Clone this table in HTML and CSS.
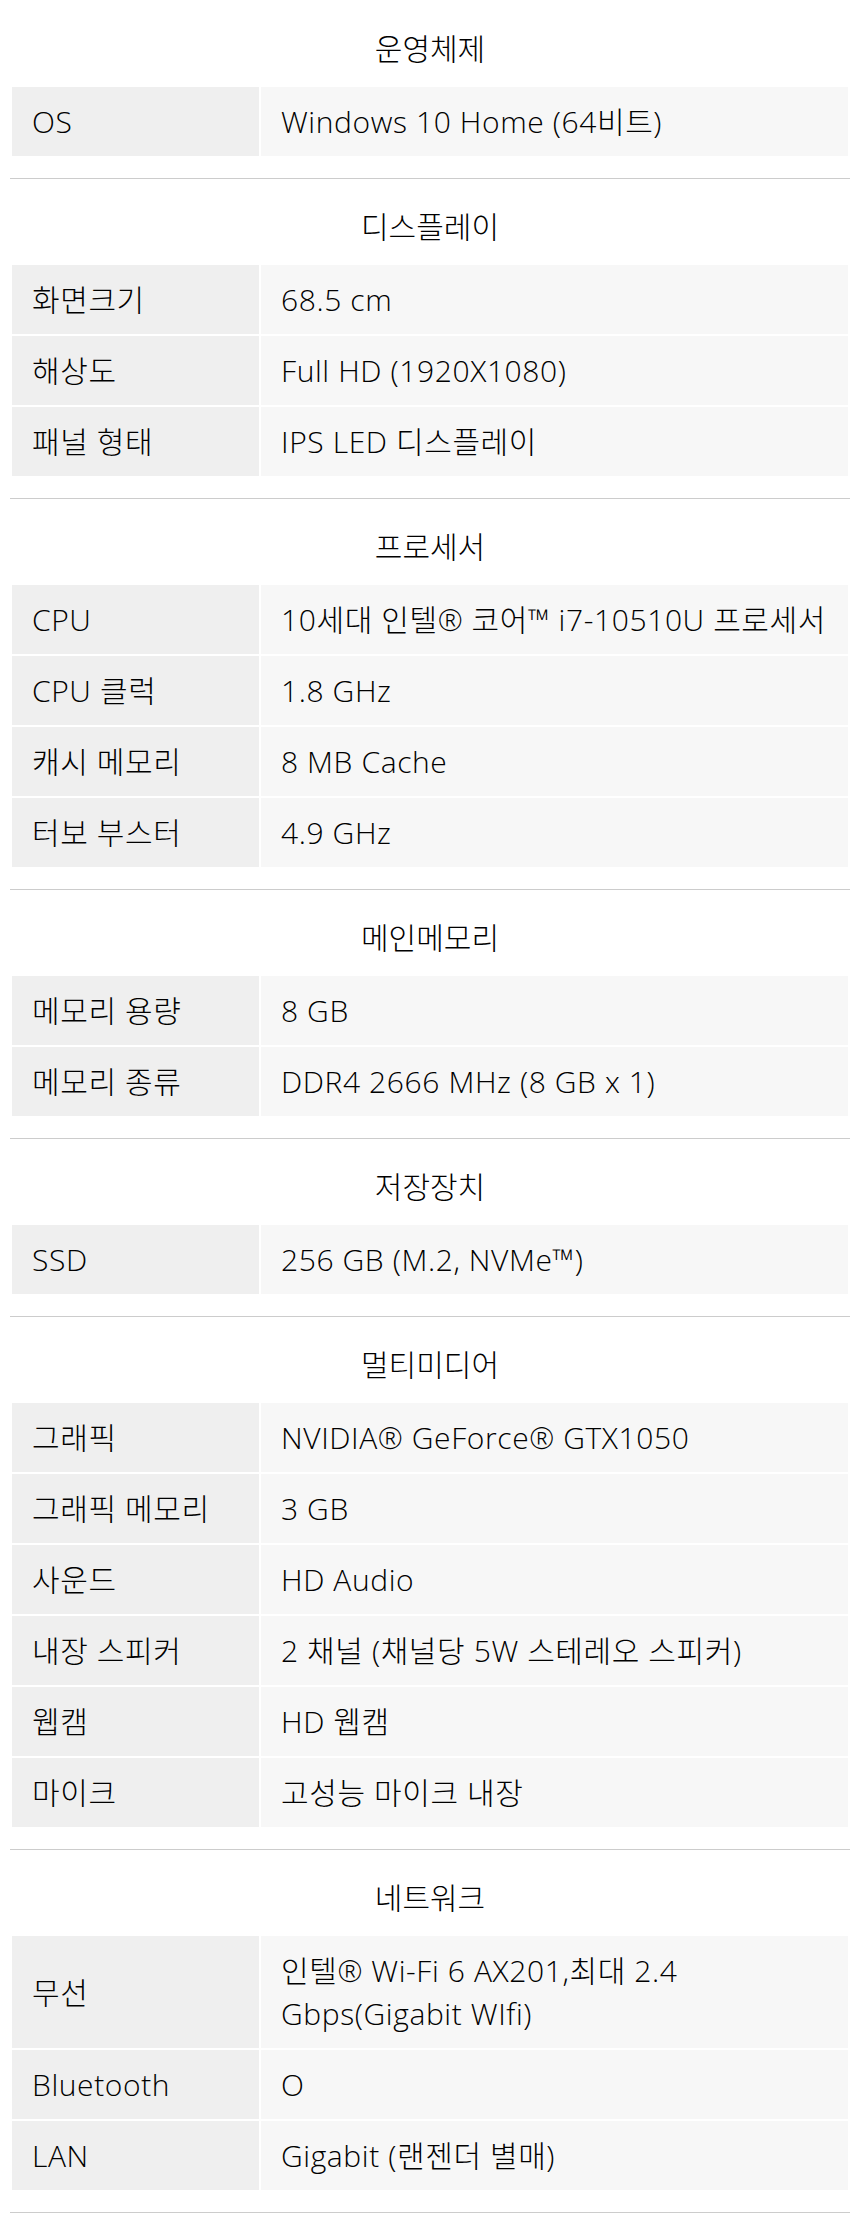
FILE: index.html
```html
<!DOCTYPE html>
<html lang="ko">
<head>
  <meta charset="UTF-8" />
  <title>제품 사양</title>
  <link rel="stylesheet" href="styles.css">
</head>
<body>

  <div class="spec-group">
    <h2 class="spec-title">운영체제</h2>
    <table class="spec-table">
      <colgroup><col class="col-name"><col></colgroup>
      <tr><td class="spec-name">OS</td><td class="spec-value">Windows 10 Home (64비트)</td></tr>
    </table>
  </div>

  <div class="spec-group">
    <h2 class="spec-title">디스플레이</h2>
    <table class="spec-table">
      <colgroup><col class="col-name"><col></colgroup>
      <tr><td class="spec-name">화면크기</td><td class="spec-value">68.5 cm</td></tr>
      <tr><td class="spec-name">해상도</td><td class="spec-value">Full HD (1920X1080)</td></tr>
      <tr><td class="spec-name">패널 형태</td><td class="spec-value">IPS LED 디스플레이</td></tr>
    </table>
  </div>

  <div class="spec-group">
    <h2 class="spec-title">프로세서</h2>
    <table class="spec-table">
      <colgroup><col class="col-name"><col></colgroup>
      <tr><td class="spec-name">CPU</td><td class="spec-value">10세대 인텔® 코어™ i7-10510U 프로세서</td></tr>
      <tr><td class="spec-name">CPU 클럭</td><td class="spec-value">1.8 GHz</td></tr>
      <tr><td class="spec-name">캐시 메모리</td><td class="spec-value">8 MB Cache</td></tr>
      <tr><td class="spec-name">터보 부스터</td><td class="spec-value">4.9 GHz</td></tr>
    </table>
  </div>

  <div class="spec-group">
    <h2 class="spec-title">메인메모리</h2>
    <table class="spec-table">
      <colgroup><col class="col-name"><col></colgroup>
      <tr><td class="spec-name">메모리 용량</td><td class="spec-value">8 GB</td></tr>
      <tr><td class="spec-name">메모리 종류</td><td class="spec-value">DDR4 2666 MHz (8 GB x 1)</td></tr>
    </table>
  </div>

  <div class="spec-group">
    <h2 class="spec-title">저장장치</h2>
    <table class="spec-table">
      <colgroup><col class="col-name"><col></colgroup>
      <tr><td class="spec-name">SSD</td><td class="spec-value">256 GB (M.2, NVMe™)</td></tr>
    </table>
  </div>

  <div class="spec-group">
    <h2 class="spec-title">멀티미디어</h2>
    <table class="spec-table">
      <colgroup><col class="col-name"><col></colgroup>
      <tr><td class="spec-name">그래픽</td><td class="spec-value">NVIDIA® GeForce® GTX1050</td></tr>
      <tr><td class="spec-name">그래픽 메모리</td><td class="spec-value">3 GB</td></tr>
      <tr><td class="spec-name">사운드</td><td class="spec-value">HD Audio</td></tr>
      <tr><td class="spec-name">내장 스피커</td><td class="spec-value">2 채널 (채널당 5W 스테레오 스피커)</td></tr>
      <tr><td class="spec-name">웹캠</td><td class="spec-value">HD 웹캠</td></tr>
      <tr><td class="spec-name">마이크</td><td class="spec-value">고성능 마이크 내장</td></tr>
    </table>
  </div>

  <div class="spec-group">
    <h2 class="spec-title">네트워크</h2>
    <table class="spec-table">
      <colgroup><col class="col-name"><col></colgroup>
      <tr><td class="spec-name">무선</td><td class="spec-value">인텔® Wi-Fi 6 AX201,최대 2.4 Gbps(Gigabit WIfi)</td></tr>
      <tr><td class="spec-name">Bluetooth</td><td class="spec-value">O</td></tr>
      <tr><td class="spec-name">LAN</td><td class="spec-value">Gigabit (랜젠더 별매)</td></tr>
    </table>
  </div>

</body>
</html>
```

FILE: styles.css
```css
body {
  margin: 0;
  padding: 1px 10px 16px 10px;
  font-family: 'Open Sans', 'Noto Sans CJK KR', sans-serif;
  font-size: 30px;
  font-weight: 300;
  color: #000;
  background: white;
}
.spec-group {
  padding-top: 27px;
  padding-bottom: 20px;
  border-bottom: 1px solid #cccccc;
}
.spec-title {
  margin: 0 0 15px 0;
  text-align: center;
  font-size: 30px;
  font-weight: 300;
  line-height: 42px;
  color: #000;
}
.spec-table {
  width: 100%;
  table-layout: fixed;
  border-spacing: 2px;
}
.col-name {
  width: 247px;
}
.spec-table td {
  padding: 13px 8px 13px 20px;
  line-height: 43px;
  letter-spacing: 0.6px;
  vertical-align: middle;
}
.spec-name {
  background-color: #efefef;
}
.spec-value {
  background-color: #f7f7f7;
}
```
